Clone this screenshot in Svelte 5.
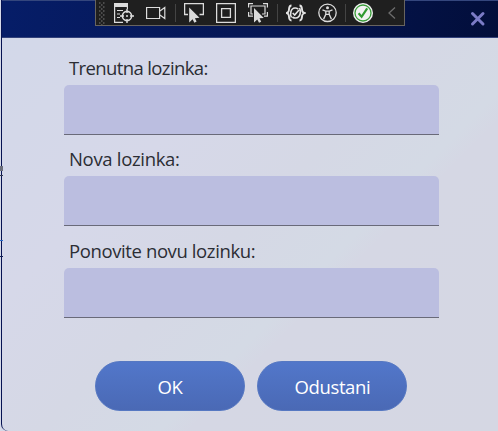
<script>
  const fields = [
    { id: 'current', label: 'Trenutna lozinka:' },
    { id: 'next', label: 'Nova lozinka:' },
    { id: 'repeat', label: 'Ponovite novu lozinku:' }
  ];
</script>

<div class="window">
  <div class="behind"><i class="a"></i><i class="b"></i><i class="c"></i><i class="d"></i></div>
  <div class="dialog">
    <header>
      <button class="close" aria-label="Zatvori">
        <svg width="16" height="16" viewBox="0 0 16 16"><path d="M2.5 2.5 13 13M13 2.5 2.5 13" stroke="#7b7bc6" stroke-width="3" stroke-linecap="round" /></svg>
      </button>
    </header>
    <form onsubmit={(e) => e.preventDefault()}>
      {#each fields as f}
        <div class="field">
          <label for={f.id} class={f.id}>{f.label}</label>
          <input id={f.id} type="password" />
        </div>
      {/each}
      <div class="actions">
        <button class="pill ok">OK</button>
        <button class="pill cancel" type="button">Odustani</button>
      </div>
    </form>
  </div>

  <div class="toolbar">
    <svg class="grip" width="6" height="23" viewBox="0 0 6 23">
      {#each [1, 5, 9, 13, 17, 21] as y}
        <path d="M0 {y}h1.5M4 {y}h1.5M2 {y + 2}h1.5" stroke="#5c5c5c" stroke-width="1.3" />
      {/each}
    </svg>
    <svg style:margin-left="9px" width="20" height="20" viewBox="0 0 20 20" fill="none" stroke="#dcdcdc">
      <path d="M.6 0v19.4H9M13.4 4v2" stroke-width="1.2" /><path d="M0 0h14v4H0z" fill="#dcdcdc" stroke="none" />
      <path d="M3 7.5h6M3 11h3M3 14.5h3" stroke-width="1.2" />
      <circle cx="13" cy="13" r="4.6" stroke-width="1.6" /><path d="M13 6v4M13 16v4M6 13h4M16 13h4" stroke-width="1.4" /><circle cx="13" cy="13" r="1" fill="#dcdcdc" stroke="none" />
    </svg>
    <svg style:margin-left="12px" width="20" height="20" viewBox="0 0 20 20" fill="none" stroke="#dcdcdc" stroke-width="1.2">
      <path d="M.6 4.5h13v11H.6zM13.6 8.3l5.2-3.8v11l-5.2-3.8" />
    </svg>
    <i class="sep" style:margin-left="9px"></i>
    <svg style:margin-left="8px" width="20" height="20" viewBox="0 0 20 20" fill="none" stroke="#dcdcdc" stroke-width="1.3">
      <path d="M4 11.5H.6V.6h18.8v10.9H15.5" /><path d="M5.2 4.5v15l3.4-3.2 1.8 3.4 2.2-1.1-1.7-3.4 4.6-.4z" fill="#dcdcdc" stroke="none" />
    </svg>
    <svg style:margin-left="12px" width="20" height="20" viewBox="0 0 20 20" fill="none" stroke="#dcdcdc" stroke-width="1.3">
      <path d="M.6.6h18.8v18.8H.6z" /><path d="M5.6 5.6h8.8v8.8H5.6z" />
    </svg>
    <svg style:margin-left="12px" width="20" height="20" viewBox="0 0 20 20" fill="none" stroke="#dcdcdc" stroke-width="1.2">
      <path d="M.6 4.5V.6H5M15 .6h4.4v3.9M.6 9v4.2H5M19.4 9v4.2H16M5 11H3V3h14v8h-3" /><path d="M6 5v14.5l3.3-3 1.7 3.3 2.2-1.1-1.7-3.4 4.3-.4z" fill="#dcdcdc" stroke="none" />
    </svg>
    <i class="sep" style:margin-left="9px"></i>
    <svg style:margin-left="8px" width="20" height="20" viewBox="0 0 20 20" fill="none" stroke="#e4e4e4" stroke-width="1.9">
      <path d="M5.5 2.5C2.4 2.5 3.4 6 2.7 8c-.3 1-1.1 1.7-2 2 .9.3 1.7 1 2 2 .7 2-.3 5.5 2.8 5.5M13.5 2.5c3.1 0 2.1 3.5 2.8 5.5.3 1 1.1 1.7 2 2-.9.3-1.7 1-2 2-.7 2 .3 5.5-2.8 5.5" />
      <path d="M5.5 14.5C3.7 11.5 4.5 5.2 9 5c1.8-.1 2.5.5 3.3 1M13.5 5c1.8 3 1 9.7-3.8 10-1.5.1-2.5-.4-3.3-1M6.7 10l2 2.1 4.3-5" stroke-width="1.6" />
    </svg>
    <svg style:margin-left="12px" width="20" height="20" viewBox="0 0 20 20" fill="none" stroke="#dcdcdc" stroke-width="1.3">
      <circle cx="9.5" cy="9.8" r="8.7" /><circle cx="9.5" cy="4.8" r="1.5" fill="#dcdcdc" stroke="none" />
      <path d="m4.5 6.8 3.3 1.4v3.2l-2.2 4.7M14.5 6.8l-3.3 1.4v3.2l2.2 4.7M7.8 8.2h3.4M7.8 11.4h3.4" />
    </svg>
    <i class="sep" style:margin-left="7px"></i>
    <svg style:margin-left="7px" width="20" height="20" viewBox="0 0 20 20" fill="none">
      <circle cx="10" cy="10" r="10" fill="#f2f2f2" /><circle cx="10" cy="10" r="8" stroke="#3a9d3a" stroke-width="1.3" /><path d="m5.6 10.3 3 3.5 5.6-8.4" stroke="#309a30" stroke-width="2.2" />
    </svg>
    <svg style:margin-left="14px" width="11" height="20" viewBox="0 0 11 20" fill="none"><path d="M8 4.5 2 10l6 5.5" stroke="#6c6c6c" stroke-width="1.3" /></svg>
  </div>
</div>

<style>
  :global(body) { margin: 0; overflow: hidden; }
  .window { position: relative; width: 498px; height: 431px; overflow: hidden; background: #d6dae9; font-family: "Open Sans", "Noto Sans", sans-serif; }
  .behind i { position: absolute; left: 0; width: 3px; height: 1px; background: #101d52; }
  .behind .a { top: 166px; height: 5px; background: #6c6f7b; }
  .behind .b { top: 175px; background: #333a50; }
  .behind .c { top: 240px; background: #2869c8; }
  .behind .d { top: 256px; }
  .dialog { box-sizing: border-box; margin-left: 1px; width: 505px; height: 431px; border-left: 1px solid #061252; border-bottom-left-radius: 7px; overflow: hidden; background: linear-gradient(135deg, #d2d8e9 0%, #d6d8e9 32%, #d5d8e5 50%, #d4dae5 63%, #d5d7e4 66%, #d5d7e3 100%); }
  header { box-sizing: border-box; width: 496px; height: 38px; border-top: 1px solid #34467d; border-bottom: 1px solid #33427b; background: linear-gradient(100deg, #061d68, #051653 55%, #020e3a); display: flex; justify-content: flex-end; align-items: center; padding-right: 12px; }
  .close { border: 0; padding: 0; background: none; width: 16px; height: 16px; display: block; }
  svg { display: block; flex: none; }
  form { width: 375px; margin-left: 62px; padding-top: 13px; }
  .field { height: 91.4px; display: flex; flex-direction: column; }
  label { height: 34px; line-height: 33px; padding-left: 5px; font-size: 18.5px; color: #2b2d34; white-space: nowrap; }
  .current { letter-spacing: -.62px; }
  .next { letter-spacing: -.32px; line-height: 34px; }
  .repeat { letter-spacing: -.39px; }
  input { box-sizing: border-box; width: 375px; height: 50px; border: 0; border-bottom: 1px solid #696a79; border-radius: 5px 5px 0 0; background: #bbbee0; outline: 0; padding: 0 8px; }
  .actions { display: flex; gap: 12.4px; padding-left: 31px; margin-top: 35.6px; }
  .pill { box-sizing: border-box; width: 150px; height: 50px; border: 1px solid #5678c2; border-radius: 25px; background: linear-gradient(#5277ca, #4a69b5); color: #fff; font: 18.5px "Open Sans", "Noto Sans", sans-serif; letter-spacing: -.4px; padding: 1px 0 0; }
  .toolbar { position: absolute; left: 95px; top: 0; box-sizing: border-box; width: 310px; height: 26px; border: 1px solid #68645f; border-top: 0; background: #1f1f1f; display: flex; align-items: center; padding: 1px 0 0 3px; }
  .sep { width: 1px; height: 18px; background: #444; flex: none; }
</style>
